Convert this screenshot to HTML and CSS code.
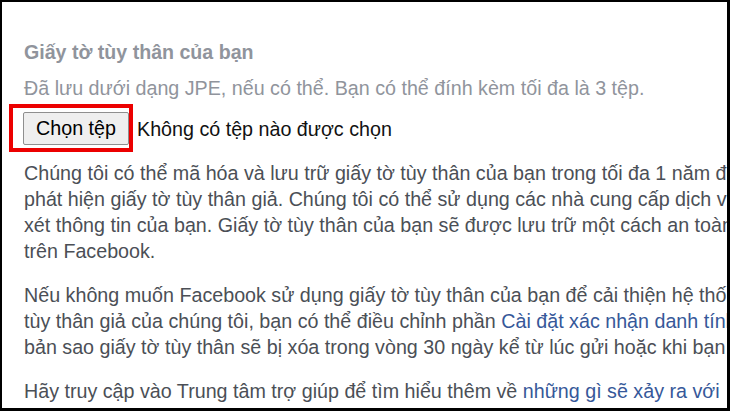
FILE: index.html
```html
<!DOCTYPE html>
<html lang="vi">
<head>
<meta charset="utf-8">
<link rel="stylesheet" href="styles.css">
</head>
<body>
<div class="frame">
  <div class="content">
    <h2 class="title">Giấy tờ tùy thân của bạn</h2>
    <div class="hint">Đã lưu dưới dạng JPE, nếu có thể. Bạn có thể đính kèm tối đa là 3 tệp.</div>
    <div class="file-row">
      <span class="highlight"></span>
      <button class="file-btn" type="button">Chọn tệp</button>
      <span class="file-status">Không có tệp nào được chọn</span>
    </div>
    <p class="para">Chúng tôi có thể mã hóa và lưu trữ giấy tờ tùy thân của bạn trong tối đa 1 năm để<br>phát hiện giấy tờ tùy thân giả. Chúng tôi có thể sử dụng các nhà cung cấp dịch vụ<br>xét thông tin của bạn. Giấy tờ tùy thân của bạn sẽ được lưu trữ một cách an toàn<br>trên Facebook.</p>
    <p class="para">Nếu không muốn Facebook sử dụng giấy tờ tùy thân của bạn để cải thiện hệ thống<br>tùy thân giả của chúng tôi, bạn có thể điều chỉnh phần <a class="link" href="#">Cài đặt xác nhận danh tính</a><br>bản sao giấy tờ tùy thân sẽ bị xóa trong vòng 30 ngày kể từ lúc gửi hoặc khi bạn</p>
    <p class="para">Hãy truy cập vào Trung tâm trợ giúp để tìm hiểu thêm về <a class="link" href="#">những gì sẽ xảy ra với</a><br>bạn gửi cho chúng tôi.</p>
  </div>
</div>
</body>
</html>
```
FILE: styles.css
```css
html, body {
  margin: 0;
  padding: 0;
  background: #ffffff;
}

.frame {
  width: 730px;
  height: 411px;
  box-sizing: border-box;
  border-top: 2px solid #000;
  border-left: 2px solid #000;
  border-right: 3px solid #000;
  border-bottom: 3px solid #000;
  overflow: hidden;
  background: #fff;
}

.content {
  padding: 37px 0 0 22px;
  font-family: "Liberation Sans", Arial, sans-serif;
  font-size: 19.7px;
  line-height: 26px;
  color: #4b4f56;
  white-space: nowrap;
}

.title {
  margin: 0;
  font-size: 19.6px;
  line-height: 26px;
  font-weight: bold;
  color: #90949c;
}

.hint {
  margin-top: 10px;
  color: #90949c;
}

.file-row {
  position: relative;
  margin-top: 11px;
  display: flex;
  align-items: center;
  height: 33px;
}

.file-btn {
  height: 33px;
  width: 106px;
  box-sizing: border-box;
  padding: 0;
  margin: 0 8px 0 -1px;
  font-family: "Liberation Sans", Arial, sans-serif;
  font-size: 19.7px;
  color: #000;
  background: #efefef;
  border: 1px solid #8f8f8f;
  border-radius: 2px;
}

.file-status {
  color: #111;
}

.highlight {
  position: absolute;
  left: -15px;
  top: -8px;
  width: 124px;
  height: 48px;
  box-sizing: border-box;
  border: 4px solid #ec0000;
}

.para {
  margin: 15px 0 0 0;
}

.para + .para {
  margin-top: 18px;
}

.link {
  color: #365899;
  text-decoration: none;
}
```
